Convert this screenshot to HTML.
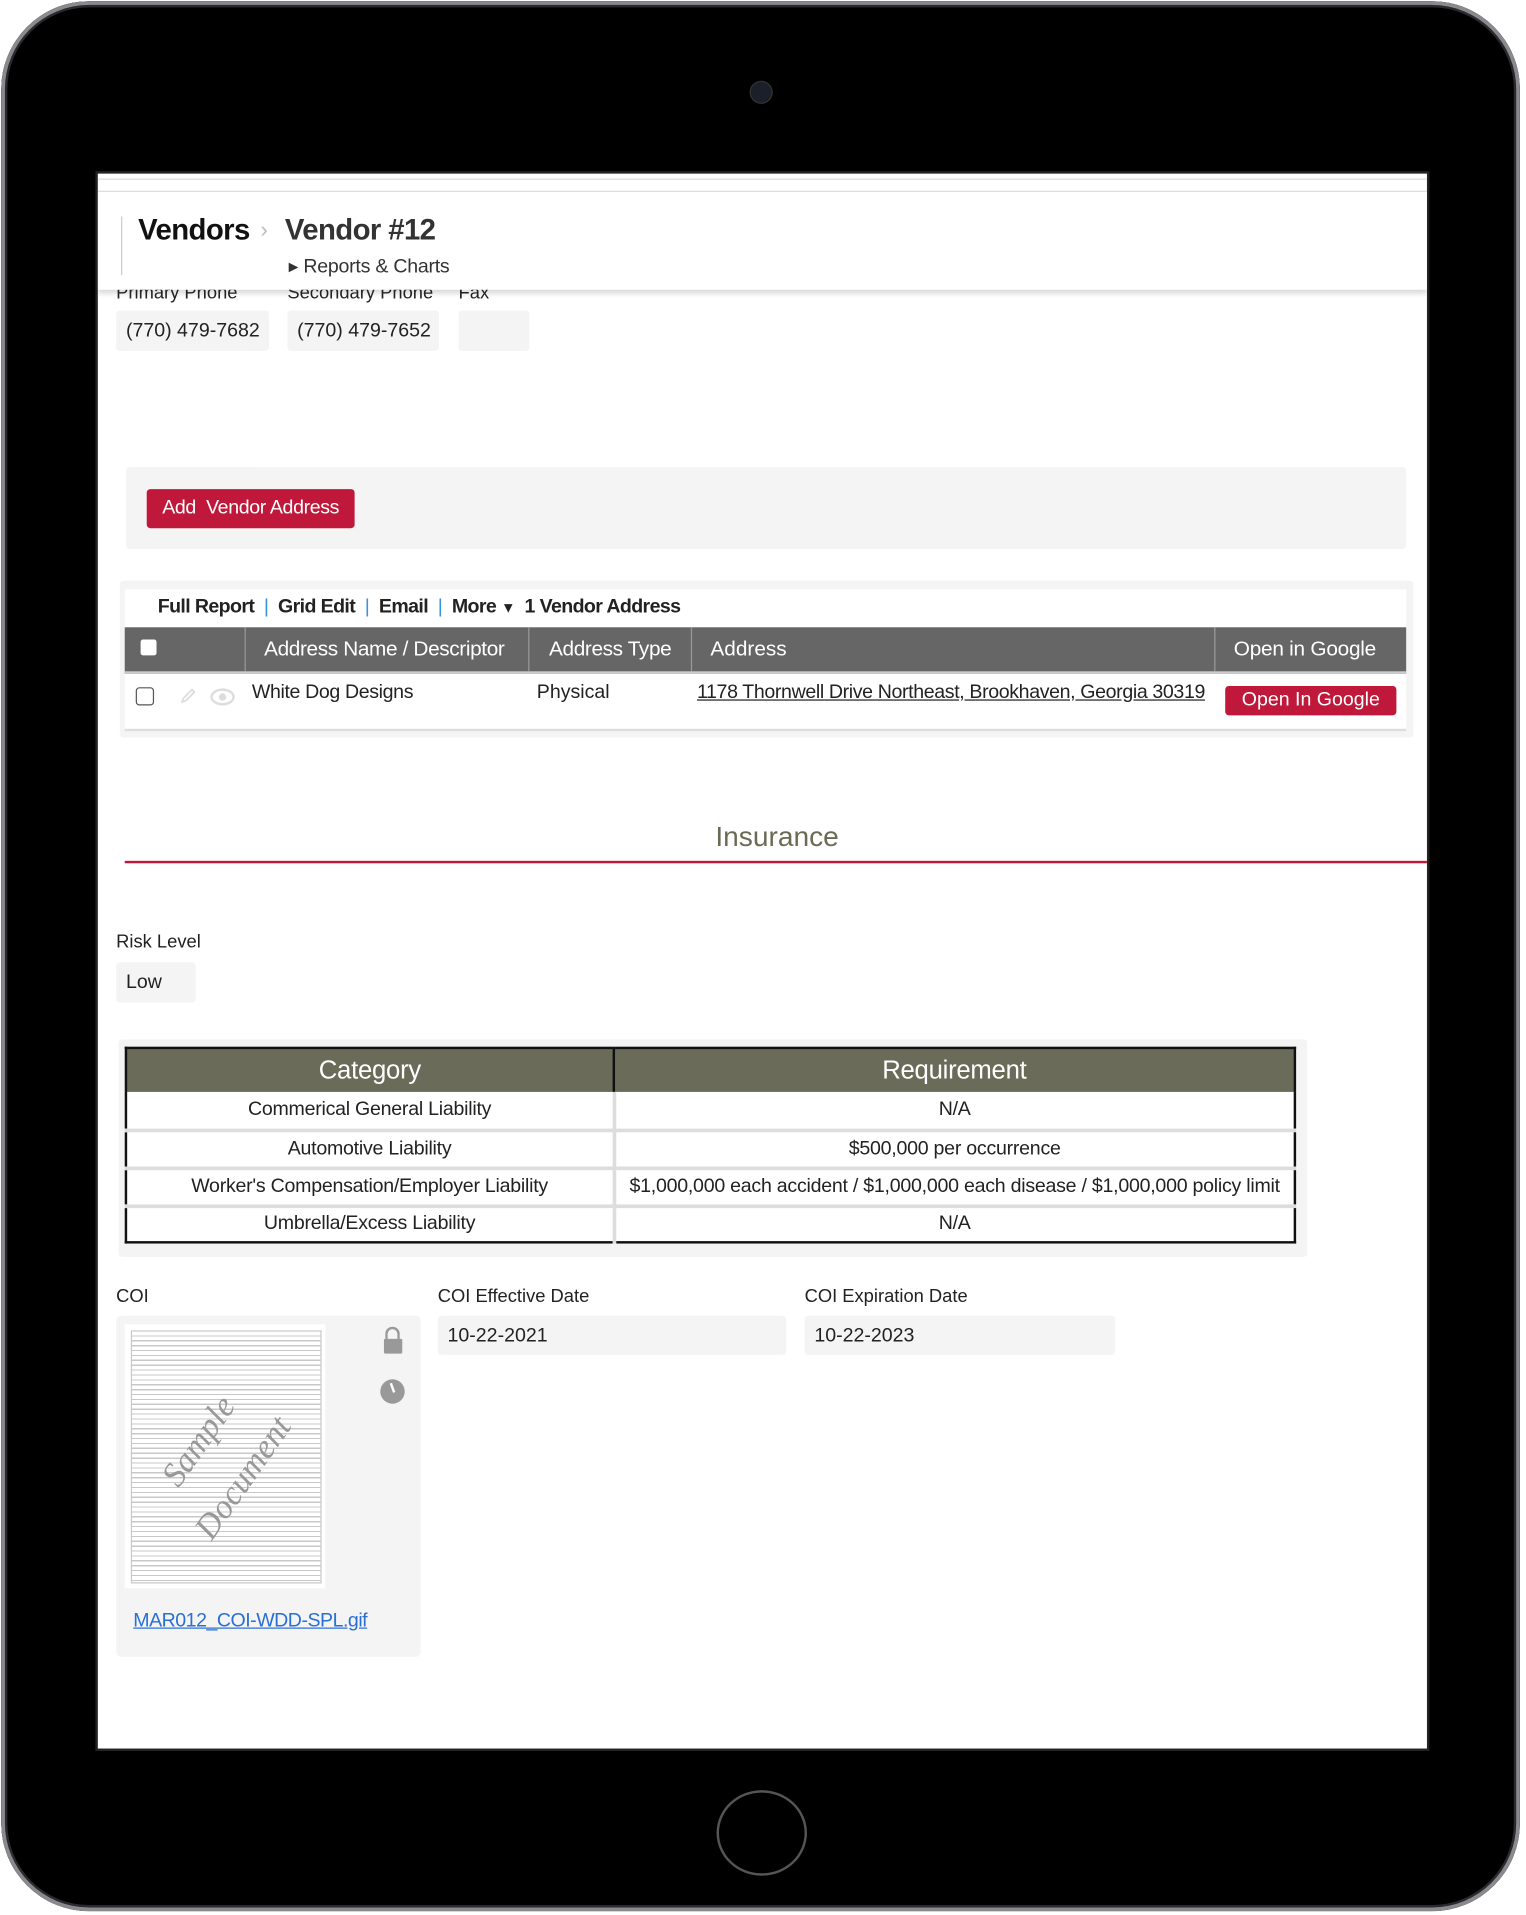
<!DOCTYPE html>
<html><head><meta charset="utf-8"><style>
html,body{margin:0;padding:0;width:1526px;height:1915px;overflow:hidden;background:#fff;}
#w{position:absolute;left:0;top:0;width:1248px;height:1566px;transform:scale(1.22276);transform-origin:0 0;font-family:"Liberation Sans",sans-serif;color:#222;}
.a{position:absolute;}
.dev{left:1px;top:1px;width:1242px;height:1562px;background:#000;border-radius:72px;box-shadow:inset 0 0 0 3px #8a8a8e, inset 0 0 0 5px #2a2a2c;}
.scr{left:80px;top:142px;width:1087px;height:1288px;background:#fff;overflow:hidden;box-shadow:0 0 0 2px #222;}
.t{position:absolute;white-space:nowrap;}
.inp{position:absolute;background:#f4f4f4;border-radius:3px;font-size:16px;line-height:33px;padding-left:8px;box-sizing:border-box;}
.lbl{position:absolute;font-size:15px;white-space:nowrap;}
th,td{padding:0;}
</style></head><body><div id="w">
<div class="a dev"></div>
<div class="a" style="left:614px;top:67px;width:17px;height:17px;border-radius:50%;background:#1a1f2a;box-shadow:0 0 0 1px #333"></div>
<div class="a" style="left:586px;top:1464px;width:74px;height:70px;border-radius:50%;border:2px solid #555;box-sizing:border-box"></div>
<div class="a scr">
 <div class="a" style="left:0;top:4px;width:1087px;height:1px;background:#ddd"></div>
 <div class="a" style="left:0;top:14px;width:1087px;height:80px;background:#fff;border-top:1px solid #ddd;box-shadow:0 3px 4px rgba(0,0,0,0.15)"></div>
 <div class="a" style="left:19px;top:35px;width:1px;height:48px;background:#ccc"></div>
 <div class="t" style="left:33px;top:33px;font-size:24px;font-weight:bold;color:#111;letter-spacing:-0.5px">Vendors</div>
 <div class="t" style="left:133px;top:36px;font-size:18px;color:#bbb">›</div>
 <div class="t" style="left:153px;top:33px;font-size:24px;font-weight:bold;color:#333;letter-spacing:-0.5px">Vendor #12</div>
 <div class="t" style="left:156px;top:66px;font-size:16px;color:#333;letter-spacing:-0.2px">&#9656; Reports &amp; Charts</div>
 <div class="lbl" style="left:15px;top:89px;clip-path:inset(6px 0 0 0)">Primary Phone</div>
 <div class="lbl" style="left:155px;top:89px;clip-path:inset(6px 0 0 0)">Secondary Phone</div>
 <div class="lbl" style="left:295px;top:89px;clip-path:inset(6px 0 0 0)">Fax</div>
 <div class="inp" style="left:15px;top:112px;width:125px;height:33px">(770) 479-7682</div>
 <div class="inp" style="left:155px;top:112px;width:124px;height:33px">(770) 479-7652</div>
 <div class="inp" style="left:295px;top:112px;width:58px;height:33px"></div>
 <div class="a" style="left:23px;top:240px;width:1047px;height:67px;background:#f4f4f4;border-radius:3px"></div>
 <div class="a" style="left:40px;top:258px;width:170px;height:32px;background:#c0183a;border-radius:3px;color:#fff;font-size:16px;line-height:32px;text-align:center;letter-spacing:-0.3px">Add&nbsp; Vendor Address</div>
 <div class="a" style="left:18px;top:333px;width:1058px;height:128px;background:#f4f4f4;border-radius:3px"></div>
 <div class="a" style="left:22px;top:340px;width:1048px;height:114px;background:#fff;border-bottom:2px solid #ddd"></div>
 <div class="t" style="left:49px;top:346px;font-size:16px;font-weight:bold;color:#222;letter-spacing:-0.5px">Full Report <span style="color:#3b8fe0;font-weight:normal">&nbsp;|&nbsp;</span> Grid Edit <span style="color:#3b8fe0;font-weight:normal">&nbsp;|&nbsp;</span> Email <span style="color:#3b8fe0;font-weight:normal">&nbsp;|&nbsp;</span> More <span style="font-size:12px">&#9660;</span>&nbsp; 1 Vendor Address</div>
 <div class="a" style="left:22px;top:371px;width:1048px;height:36px;background:#666;border-bottom:2px solid #ccc"></div>
 <div class="a" style="left:35px;top:381px;width:13px;height:13px;background:#fff;border-radius:2px"></div>
 <div class="a" style="left:120px;top:371px;width:1px;height:36px;background:#999"></div>
 <div class="a" style="left:352px;top:371px;width:1px;height:36px;background:#999"></div>
 <div class="a" style="left:485px;top:371px;width:1px;height:36px;background:#999"></div>
 <div class="a" style="left:913px;top:371px;width:1px;height:36px;background:#999"></div>
 <div class="t" style="left:136px;top:379px;font-size:17px;color:#fff;letter-spacing:-0.3px">Address Name / Descriptor</div>
 <div class="t" style="left:369px;top:379px;font-size:17px;color:#fff;letter-spacing:-0.3px">Address Type</div>
 <div class="t" style="left:501px;top:379px;font-size:17px;color:#fff">Address</div>
 <div class="t" style="left:929px;top:379px;font-size:17px;color:#fff;letter-spacing:-0.2px">Open in Google</div>
 <div class="a" style="left:31px;top:420px;width:15px;height:15px;border:1.5px solid #555;border-radius:3px;box-sizing:border-box"></div>
 <svg class="a" style="left:66px;top:419px" width="16" height="16" viewBox="0 0 16 16"><path d="M3 13 L4 10 L11 3 L13 5 L6 12 Z" fill="none" stroke="#ddd" stroke-width="1.5"/></svg>
 <div class="a" style="left:92px;top:421px;width:20px;height:14px;border-radius:50%;border:2px solid #ddd;box-sizing:border-box"></div>
 <div class="a" style="left:99px;top:425px;width:6px;height:6px;border-radius:50%;background:#ddd"></div>
 <div class="t" style="left:126px;top:416px;font-size:16px;color:#222;letter-spacing:-0.3px">White Dog Designs</div>
 <div class="t" style="left:359px;top:416px;font-size:16px;color:#222">Physical</div>
 <div class="t" style="left:490px;top:416px;font-size:16px;color:#222;text-decoration:underline;letter-spacing:-0.3px">1178 Thornwell Drive Northeast, Brookhaven, Georgia 30319</div>
 <div class="a" style="left:922px;top:419px;width:140px;height:24px;background:#c0183a;border-radius:3px;color:#fff;font-size:16px;line-height:24px;text-align:center">Open In Google</div>
 <div class="t" style="left:505px;top:529px;font-size:23px;color:#6b6b55">Insurance</div>
 <div class="a" style="left:22px;top:562px;width:1065px;height:2px;background:#c0183a"></div>
 <div class="lbl" style="left:15px;top:620px">Risk Level</div>
 <div class="inp" style="left:15px;top:645px;width:65px;height:33px">Low</div>
 <div class="a" style="left:17px;top:708px;width:972px;height:178px;background:#f4f4f4;border-radius:3px"></div>
 <table class="a" style="left:22px;top:714px;width:958px;border-collapse:collapse;border:2px solid #111;font-size:16px;text-align:center;background:#fff;letter-spacing:-0.2px">
  <tr style="background:#6b6b5a;color:#fff;font-size:21px;height:36px"><th style="width:397px;border-right:2px solid #111;font-weight:normal">Category</th><th style="font-weight:normal">Requirement</th></tr>
  <tr style="height:31px"><td style="border-right:3px solid #ddd;border-bottom:3px solid #ddd">Commerical General Liability</td><td style="border-bottom:3px solid #ddd">N/A</td></tr>
  <tr style="height:31px"><td style="border-right:3px solid #ddd;border-bottom:3px solid #ddd">Automotive Liability</td><td style="border-bottom:3px solid #ddd">$500,000 per occurrence</td></tr>
  <tr style="height:31px"><td style="border-right:3px solid #ddd;border-bottom:3px solid #ddd">Worker's Compensation/Employer Liability</td><td style="border-bottom:3px solid #ddd">$1,000,000 each accident / $1,000,000 each disease / $1,000,000 policy limit</td></tr>
  <tr style="height:30px"><td style="border-right:3px solid #ddd">Umbrella/Excess Liability</td><td>N/A</td></tr>
 </table>
 <div class="lbl" style="left:15px;top:910px">COI</div>
 <div class="lbl" style="left:278px;top:910px">COI Effective Date</div>
 <div class="lbl" style="left:578px;top:910px">COI Expiration Date</div>
 <div class="a" style="left:15px;top:934px;width:249px;height:279px;background:#f4f4f4;border-radius:4px"></div>
 <div class="a" style="left:22px;top:941px;width:164px;height:216px;background:#fff">
  <div class="a" style="left:5px;top:5px;width:154px;height:205px;border:1px solid #bbb;background:repeating-linear-gradient(#fff 0 3px,#bbb 3px 4px);opacity:.8"></div>
  <div class="t" style="left:20px;top:80px;font-size:28px;font-family:'Liberation Serif',serif;font-style:italic;color:#999;transform:rotate(-55deg)">Sample</div>
  <div class="t" style="left:40px;top:110px;font-size:28px;font-family:'Liberation Serif',serif;font-style:italic;color:#999;transform:rotate(-55deg)">Document</div>
 </div>
 <div class="a" style="left:234px;top:953px;width:15px;height:12px;background:#999;border-radius:1px"></div>
 <div class="a" style="left:235px;top:943px;width:12px;height:12px;border:2px solid #999;border-bottom:none;border-radius:6px 6px 0 0;box-sizing:border-box"></div>
 <div class="a" style="left:231px;top:986px;width:20px;height:20px;border-radius:50%;background:#999"></div>
 <div class="a" style="left:240px;top:989px;width:2px;height:8px;background:#fff;transform:rotate(-20deg)"></div>
 <div class="t" style="left:29px;top:1175px;font-size:16px;color:#2a6fd6;text-decoration:underline;letter-spacing:-0.4px">MAR012_COI-WDD-SPL.gif</div>
 <div class="inp" style="left:278px;top:934px;width:285px;height:32px">10-22-2021</div>
 <div class="inp" style="left:578px;top:934px;width:254px;height:32px">10-22-2023</div>
</div>
</div></body></html>
